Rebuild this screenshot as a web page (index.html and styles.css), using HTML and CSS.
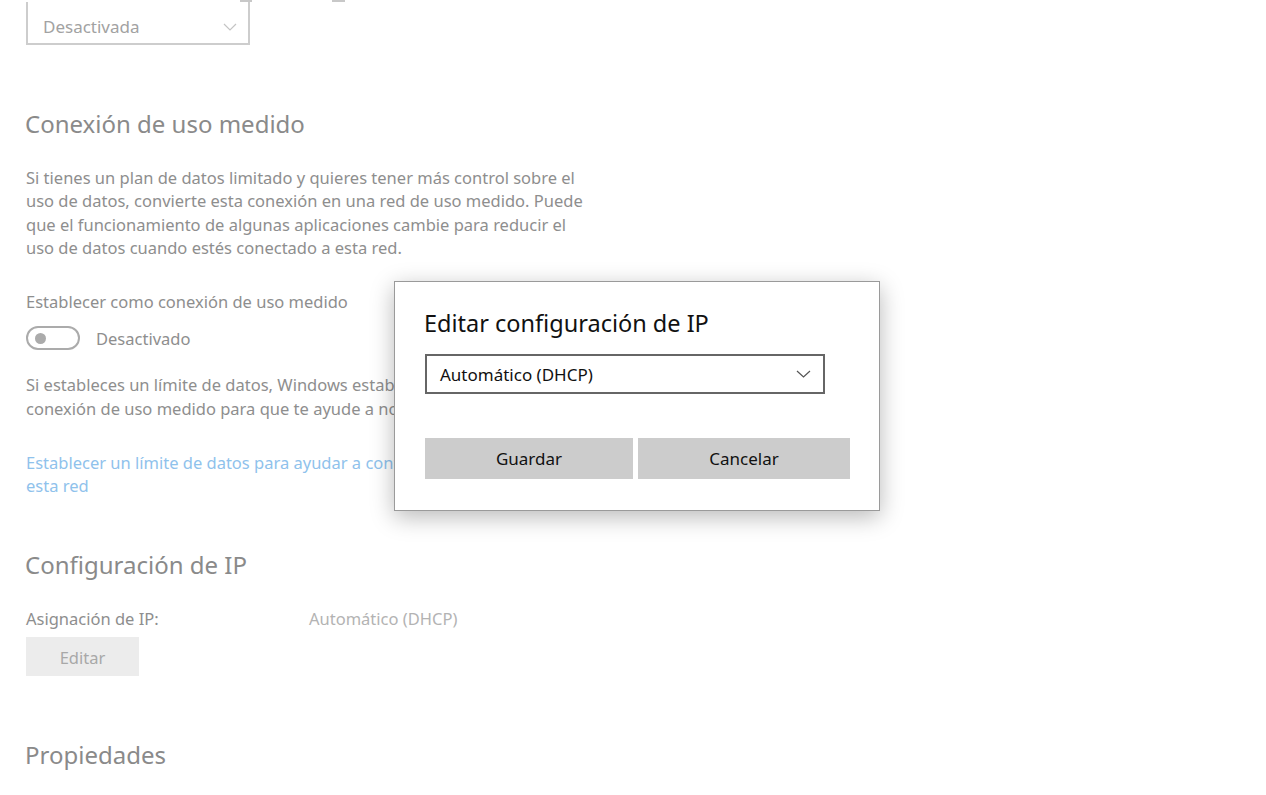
FILE: index.html
```html
<!DOCTYPE html>
<html lang="es">
<head>
	<meta charset="UTF-8">
	<title>Configuración de red</title>
	<link rel="stylesheet" href="styles.css">
</head>
<body>
<section class="page">
	<div class="cut">
		<span class="dash dash-1"></span>
		<span class="dash dash-2"></span>
	</div>
	<div class="combo combo-top">
		<span>Desactivada</span>
		<svg class="chev" width="14" height="8" viewBox="0 0 14 8"><polyline points="1,1 7,7 13,1" fill="none" stroke="#c4c4c4" stroke-width="1.2"/></svg>
	</div>

	<h2 class="title t-metered">Conexión de uso medido</h2>
	<p class="txt p-metered">Si tienes un plan de datos limitado y quieres tener más control sobre el uso de datos, convierte esta conexión en una red de uso medido. Puede que el funcionamiento de algunas aplicaciones cambie para reducir el uso de datos cuando estés conectado a esta red.</p>

	<p class="txt label">Establecer como conexión de uso medido</p>
	<div class="toggle-row">
		<span class="toggle"><i></i></span>
		<span class="txt">Desactivado</span>
	</div>

	<p class="txt p-limit">Si estableces un límite de datos, Windows establecerá esta configuración de<br>conexión de uso medido para que te ayude a no superar el límite.</p>

	<a href="javascript:;" class="txt link">Establecer un límite de datos para ayudar a controlar el uso de datos en<br>esta red</a>

	<h2 class="title t-ip">Configuración de IP</h2>
	<div class="ip-row">
		<span class="txt ip-key">Asignación de IP:</span>
		<span class="txt ip-val">Automático (DHCP)</span>
	</div>
	<a href="javascript:;" class="btn-edit">Editar</a>

	<h2 class="title t-props">Propiedades</h2>
</section>

<!-- cuadro de diálogo -->
<div class="dialog">
	<h3>Editar configuración de IP</h3>
	<div class="combo combo-dlg">
		<span>Automático (DHCP)</span>
		<svg class="chev" width="15" height="8" viewBox="0 0 15 8"><polyline points="1,1 7.5,7 14,1" fill="none" stroke="#555" stroke-width="1.2"/></svg>
	</div>
	<div class="dlg-btns">
		<a href="javascript:;">Guardar</a>
		<a href="javascript:;">Cancelar</a>
	</div>
</div>
</body>
</html>
```

FILE: styles.css
```css
body, h1, h2, h3, p, ul, ol, li
{
	margin: 0;
	padding: 0;
}

html, body {
	width: 100%;
	height: 100%;
	overflow: hidden;
	font: 16px/23px "Noto Sans", "Open Sans", sans-serif;
	background: #fff;
}
a { text-decoration: none; }

.page {
	padding-left: 26px;
	width: 562px;
}

/* restos de la fila superior */
.cut {
	height: 2px;
	display: flex;
}
.dash {
	display: block;
	height: 2px;
	background: #c8c8c8;
}
.dash-1 { width: 12px; margin-left: 214px; }
.dash-2 { width: 13px; margin-left: 80px; }

.combo {
	display: flex;
	align-items: center;
	justify-content: space-between;
	box-sizing: border-box;
}
.combo-top {
	width: 224px;
	height: 43px;
	border: 2px solid #cdcdcd;
	border-top: none;
	padding: 8px 11px 0 15px;
	color: #a2a2a2;
	font-size: 17px;
}

.title {
	font-size: 24px;
	line-height: 32px;
	font-weight: normal;
	color: #8a8a8a;
	margin-left: -1px;
}
.txt {
	color: #8e8e8e;
	font-size: 16.5px;
	line-height: 23.3px;
}
.t-metered { margin-top: 63px; }
.p-metered { margin-top: 26px; }
.label { margin-top: 31px; }

.toggle-row {
	display: flex;
	align-items: center;
	gap: 16px;
	margin-top: 13px;
}
.toggle {
	display: flex;
	align-items: center;
	box-sizing: border-box;
	width: 54px;
	height: 24px;
	border: 2px solid #ababab;
	border-radius: 12px;
	padding-left: 7px;
}
.toggle i {
	display: block;
	width: 11px;
	height: 11px;
	border-radius: 50%;
	background: #ababab;
}

.p-limit {
	margin-top: 23px;
	white-space: nowrap;
}
.link {
	display: block;
	margin-top: 31px;
	color: #8fc2ec;
	white-space: nowrap;
}
.t-ip { margin-top: 51px; }
.ip-row {
	display: flex;
	margin-top: 26px;
}
.ip-key { width: 283px; }
.ip-val { color: #b3b3b3; }

.btn-edit {
	display: block;
	width: 113px;
	height: 39px;
	line-height: 41px;
	text-align: center;
	margin-top: 7px;
	background: #ececec;
	color: #a8a8a8;
	font-size: 16.5px;
}
.t-props { margin-top: 63px; }

/* diálogo encima de la página */
.dialog {
	position: absolute;
	left: 394px;
	top: 281px;
	width: 486px;
	box-sizing: border-box;
	padding: 25px 31px 31px 30px;
	background: #fff;
	border: 1px solid #9a9a9a;
	box-shadow: 0 6px 22px rgba(0, 0, 0, 0.28);
}
.dialog h3 {
	font-size: 23.5px;
	line-height: 32px;
	font-weight: normal;
	color: #111;
	margin-left: -1px;
}
.combo-dlg {
	width: 400px;
	height: 40px;
	margin-top: 15px;
	border: 2px solid #666;
	padding: 0 12px 0 13px;
	color: #111;
	font-size: 17px;
}
.dlg-btns {
	display: grid;
	grid-template-columns: 208px 212px;
	gap: 5px;
	margin-top: 44px;
}
.dlg-btns a {
	height: 41px;
	line-height: 41px;
	text-align: center;
	background: #cccccc;
	color: #111;
	font-size: 17px;
}
```
